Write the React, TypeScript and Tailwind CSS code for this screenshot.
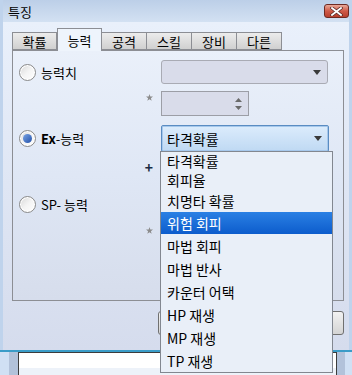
import React from 'react';

const tabs = ['확률', '능력', '공격', '스킬', '장비', '다른'];

const listItems = [
  { label: '타격확률', h: 'h-[18px]' },
  { label: '회피율', h: 'h-[20px]' },
  { label: '치명타 확률', h: 'h-[22px]' },
  { label: '위험 회피', h: 'h-[22px]', active: true },
  { label: '마법 회피', h: 'h-[23px]' },
  { label: '마법 반사', h: 'h-[23px]' },
  { label: '카운터 어택', h: 'h-[23px]' },
  { label: 'HP 재생', h: 'h-[23px]' },
  { label: 'MP 재생', h: 'h-[23px]' },
  { label: 'TP 재생', h: 'h-[23px]' },
];

const Radio = ({ checked }: { checked?: boolean }) => (
  <span className="flex h-[17px] w-[17px] shrink-0 items-center justify-center rounded-full border border-[#8a8a8a] bg-gradient-to-br from-[#d8d8d8] via-[#f4f4f4] to-white shadow-[inset_0_0_0_1px_#ffffff]">
    {checked && (
      <span className="h-[9px] w-[9px] rounded-full bg-gradient-to-br from-[#7aa4e4] to-[#2350a8]" />
    )}
  </span>
);

const Arrow = () => (
  <svg width="8" height="5" viewBox="0 0 8 5" className="shrink-0">
    <path d="M0 0 H8 L4 5 Z" fill="#3a3a3a" />
  </svg>
);

const Star = () => (
  <svg width="7" height="7" viewBox="0 0 10 10">
    <path d="M5 0 L6.2 3.6 L10 3.7 L7 6 L8.1 9.6 L5 7.5 L1.9 9.6 L3 6 L0 3.7 L3.8 3.6 Z" fill="#8c8c8c" />
  </svg>
);

const App: React.FC = () => {
  return (
    <div className="relative h-[375px] w-[352px] overflow-hidden bg-[#d0e0f4] font-['Noto_Sans_CJK_KR',sans-serif] text-black">
      {/* Window */}
      <div className="flex h-[350px] flex-col border-x-[3px] border-[#bfd3ec]">
        {/* Title bar */}
        <div className="flex h-[22px] items-center justify-between bg-gradient-to-b from-[#bccfe8] to-[#d3e1f2] pl-[5px] pr-0">
          <span className="text-[13px] leading-none">특징</span>
          <button className="flex h-[14px] w-[25px] items-center justify-center rounded-[3px] border border-[#6e2a22] bg-gradient-to-b from-[#e8a898] via-[#cf5a48] to-[#b8402e]">
            <svg width="13" height="9" viewBox="0 0 13 9">
              <path d="M2 1 L11 8 M11 1 L2 8" stroke="#5a2a26" strokeWidth="3.4" strokeLinecap="square" />
              <path d="M2 1 L11 8 M11 1 L2 8" stroke="#ffffff" strokeWidth="1.8" strokeLinecap="square" />
            </svg>
          </button>
        </div>

        {/* Body */}
        <div className="flex flex-1 flex-col bg-gradient-to-b from-[#e9f0fb] to-[#d5dced] pl-[9px] pr-[5px] pt-[6px]">
          {/* Tabs */}
          <div className="relative z-10 flex h-[22px] items-end">
            {tabs.map((t, i) =>
              i === 1 ? (
                <div
                  key={t}
                  className="-mb-px flex h-[23px] w-[45px] items-center justify-center border border-b-0 border-[#8c8e94] bg-[#eef4fc] text-[13px] leading-none"
                >
                  {t}
                </div>
              ) : (
                <div
                  key={t}
                  className="flex h-[18px] w-[45px] items-center justify-center border border-l-0 border-[#8c8e94] bg-gradient-to-b from-[#ececec] to-[#d0d0d0] text-[13px] leading-none first:border-l"
                >
                  {t}
                </div>
              )
            )}
          </div>

          {/* Panel */}
          <div className="flex h-[251px] flex-col border border-[#8c8e94] bg-gradient-to-b from-[#eaf0fa] via-[#dfe7f5] to-[#d6ddec]">
            {/* 능력치 */}
            <div className="mt-[9px] flex h-[24px] items-center">
              <div className="flex w-[148px] items-center gap-[5px] pl-[6px]">
                <Radio />
                <span className="text-[13px] leading-none">능력치</span>
              </div>
              <div className="flex h-[24px] w-[167px] items-center justify-end rounded-[3px] border border-[#a9abb4] bg-[#d9dcea] pr-[6px]">
                <Arrow />
              </div>
            </div>
            <div className="mt-[7px] flex h-[25px] items-start">
              <div className="flex w-[148px] justify-end pr-[8px] pt-[3px]">
                <Star />
              </div>
              <div className="flex h-[25px] w-[88px] flex-col items-end justify-center gap-[4px] border border-[#9c9ea6] bg-[#d9dcea] pr-[6px]">
                <svg width="7" height="4" viewBox="0 0 7 4">
                  <path d="M0 4 H7 L3.5 0 Z" fill="#6a6a6a" />
                </svg>
                <svg width="7" height="4" viewBox="0 0 7 4">
                  <path d="M0 0 H7 L3.5 4 Z" fill="#6a6a6a" />
                </svg>
              </div>
            </div>

            {/* Ex-능력 */}
            <div className="mt-[9px] flex h-[27px] items-center">
              <div className="flex w-[148px] items-center gap-[5px] pl-[6px]">
                <Radio checked />
                <span className="text-[13px] leading-none">
                  <span className="font-semibold">Ex</span>-능력
                </span>
              </div>
              <div className="flex h-[27px] w-[168px] items-center justify-between rounded-[2px] border border-[#5a8cc2] bg-gradient-to-b from-[#dcecfc] to-[#bfd9f3] pl-[5px] pr-[6px] shadow-[inset_0_0_0_1px_#a6c8ec]">
                <span className="text-[14px] leading-none">타격확률</span>
                <Arrow />
              </div>
            </div>
            <div className="flex h-[30px] items-center">
              <div className="flex w-[148px] justify-end pr-[8px]">
                <span className="text-[14px] font-bold leading-none text-[#1a2a44]">+</span>
              </div>
            </div>

            {/* SP- 능력 */}
            <div className="mt-[10px] flex h-[24px] items-center">
              <div className="flex w-[148px] items-center gap-[5px] pl-[6px]">
                <Radio />
                <span className="text-[13px] leading-none">SP- 능력</span>
              </div>
            </div>
            <div className="mt-[2px] flex h-[24px] items-center">
              <div className="flex w-[148px] justify-end pr-[8px]">
                <Star />
              </div>
            </div>
          </div>

          {/* Buttons (mostly hidden behind the open list) */}
          <div className="mt-[10px] flex h-[24px] justify-end gap-[6px]">
            <div className="w-[90px] rounded-[3px] border border-[#707070] bg-gradient-to-b from-[#f2f2f2] to-[#d4d4d4]" />
            <div className="w-[90px] rounded-[3px] border border-[#707070] bg-gradient-to-b from-[#f2f2f2] to-[#d4d4d4]" />
          </div>
        </div>
      </div>

      {/* Window bottom edge */}
      <div className="h-[2px] bg-[#3a9cc8]" />

      {/* Underlying window */}
      <div className="flex h-[23px]">
        <div className="w-[9px] bg-[#d0e0f4]" />
        <div className="w-[9px] bg-[#b2c2da]" />
        <div className="flex flex-1 flex-col border-x border-t border-[#3c3c3c]">
          <div className="h-[15px] bg-white" />
          <div className="flex-1 bg-[#edf2f9]" />
        </div>
        <div className="w-[8px] bg-[#b2c2da]" />
        <div className="w-[7px] bg-[#d0e0f4]" />
      </div>

      {/* Open dropdown list */}
      <div className="absolute left-[160px] top-[151px] z-20 w-[173px] border border-[#828790] bg-[#e9eff8]">
        {listItems.map((it) => (
          <div
            key={it.label}
            className={`${it.h} flex items-center overflow-hidden pl-[6px] text-[14px] leading-none ${
              it.active ? 'bg-gradient-to-b from-[#2a80e4] to-[#0c5ccc] text-white' : ''
            }`}
          >
            {it.label}
          </div>
        ))}
      </div>
    </div>
  );
};

export default App;
